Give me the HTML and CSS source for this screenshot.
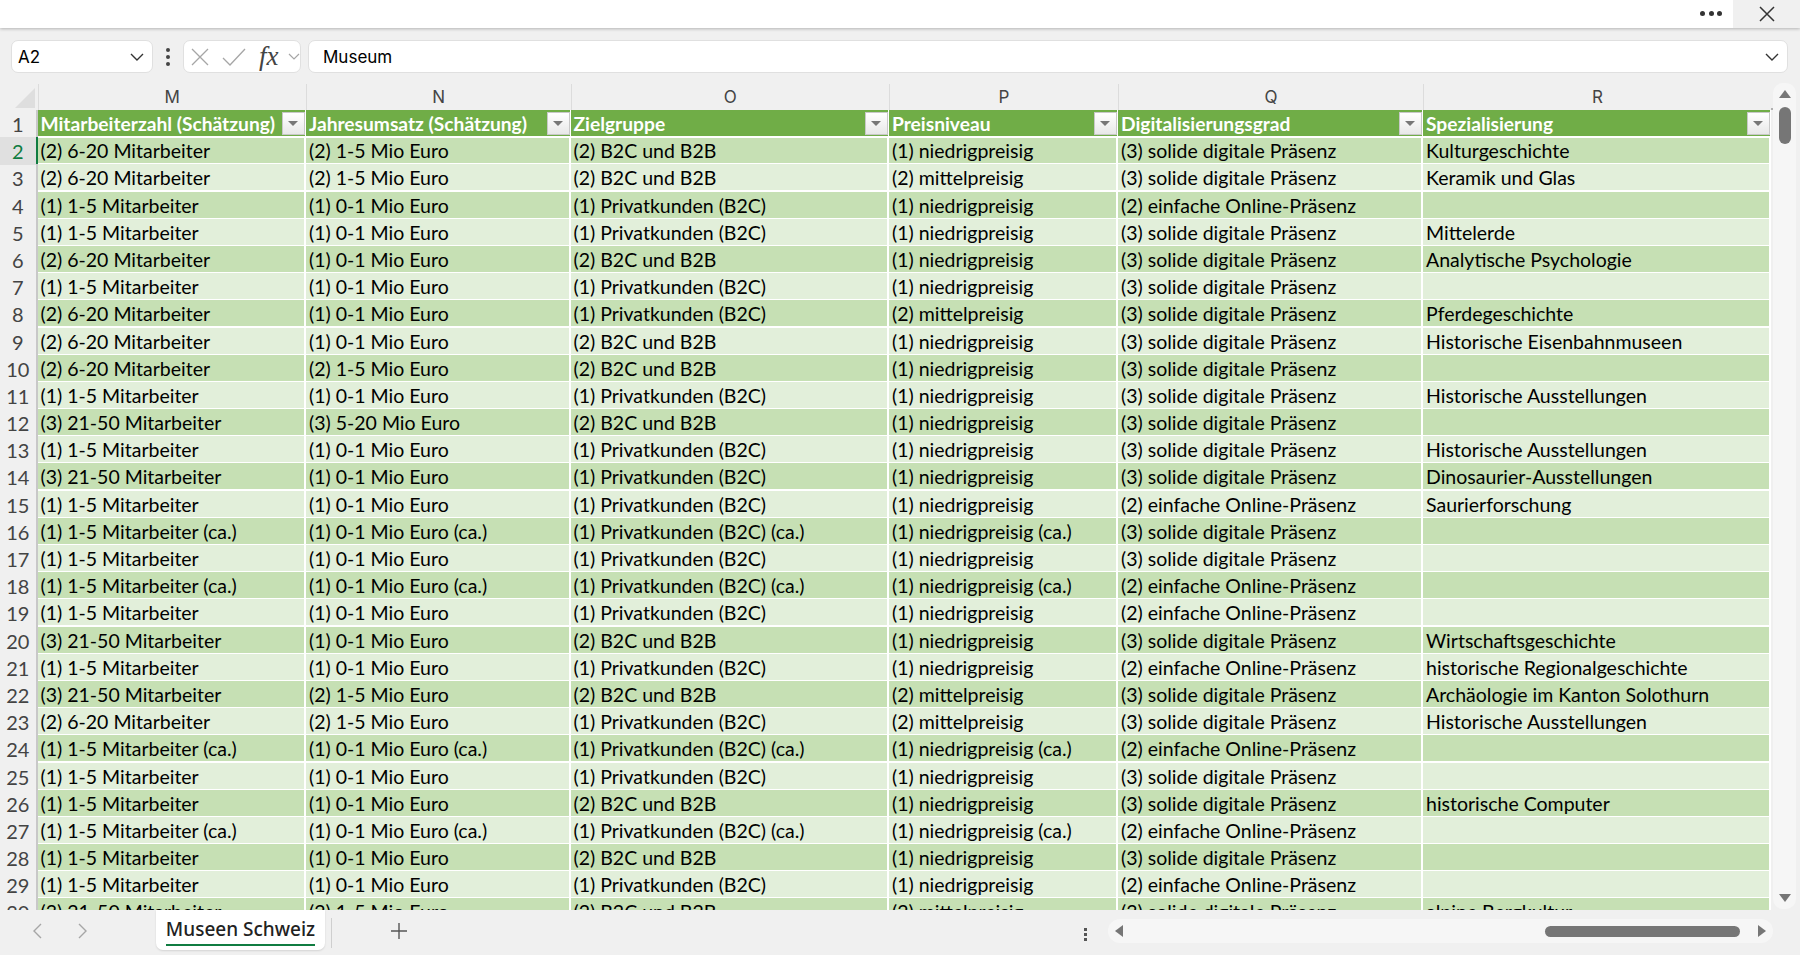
FILE: index.html
```html
<!DOCTYPE html>
<html>
<head>
  <meta charset="UTF-8">
  <title>Museen Schweiz</title>
  <link rel="stylesheet" href="styles.css">
</head>
<body>

<div class="titlebar">
  <span class="more"><i></i><i></i><i></i></span>
  <span class="close">
    <svg width="18" height="18" viewBox="0 0 18 18"><path d="M2 2 L16 16 M16 2 L2 16" stroke="#333" stroke-width="1.5" fill="none"/></svg>
  </span>
</div>

<div class="formulabar">
  <div class="box namebox">
    <span>A2</span>
    <svg width="14" height="8" viewBox="0 0 14 8"><path d="M1 1 L7 7 L13 1" stroke="#333" stroke-width="1.4" fill="none"/></svg>
  </div>
  <span class="vdots"><i></i><i></i><i></i></span>
  <div class="box fxbox">
    <svg width="18" height="18" viewBox="0 0 18 18"><path d="M1 1 L17 17 M17 1 L1 17" stroke="#a6a6a6" stroke-width="1.3" fill="none"/></svg>
    <svg class="check" width="24" height="18" viewBox="0 0 24 18"><path d="M1 10 L8 17 L23 1" stroke="#a6a6a6" stroke-width="1.3" fill="none"/></svg>
    <span class="fx">fx</span>
    <svg class="fxarrow" width="12" height="7" viewBox="0 0 12 7"><path d="M1 1 L6 6 L11 1" stroke="#a6a6a6" stroke-width="1.2" fill="none"/></svg>
  </div>
  <div class="box formula">
    <span>Museum</span>
    <svg width="14" height="8" viewBox="0 0 14 8"><path d="M1 1 L7 7 L13 1" stroke="#333" stroke-width="1.4" fill="none"/></svg>
  </div>
</div>

<div class="sheet">
  <div class="grid">
    <div class="row colheads">
      <div class="corner"><svg width="20" height="20" viewBox="0 0 20 20"><path d="M20 0 V20 H0 Z" fill="#dedede"/></svg></div>
      <div>M</div><div>N</div><div>O</div><div>P</div><div>Q</div><div>R</div>
    </div>
    <div class="row head">
      <div class="num">1</div>
      <div class="cell">Mitarbeiterzahl (Schätzung)<b class="filter"></b></div>
      <div class="cell">Jahresumsatz (Schätzung)<b class="filter"></b></div>
      <div class="cell">Zielgruppe<b class="filter"></b></div>
      <div class="cell">Preisniveau<b class="filter"></b></div>
      <div class="cell">Digitalisierungsgrad<b class="filter"></b></div>
      <div class="cell">Spezialisierung<b class="filter"></b></div>
    </div>
    <div class="row dark"><div class="num current">2</div><div class="cell">(2) 6-20 Mitarbeiter</div><div class="cell">(2) 1-5 Mio Euro</div><div class="cell">(2) B2C und B2B</div><div class="cell">(1) niedrigpreisig</div><div class="cell">(3) solide digitale Präsenz</div><div class="cell">Kulturgeschichte</div></div>
    <div class="row"><div class="num">3</div><div class="cell">(2) 6-20 Mitarbeiter</div><div class="cell">(2) 1-5 Mio Euro</div><div class="cell">(2) B2C und B2B</div><div class="cell">(2) mittelpreisig</div><div class="cell">(3) solide digitale Präsenz</div><div class="cell">Keramik und Glas</div></div>
    <div class="row dark"><div class="num">4</div><div class="cell">(1) 1-5 Mitarbeiter</div><div class="cell">(1) 0-1 Mio Euro</div><div class="cell">(1) Privatkunden (B2C)</div><div class="cell">(1) niedrigpreisig</div><div class="cell">(2) einfache Online-Präsenz</div><div class="cell"></div></div>
    <div class="row"><div class="num">5</div><div class="cell">(1) 1-5 Mitarbeiter</div><div class="cell">(1) 0-1 Mio Euro</div><div class="cell">(1) Privatkunden (B2C)</div><div class="cell">(1) niedrigpreisig</div><div class="cell">(3) solide digitale Präsenz</div><div class="cell">Mittelerde</div></div>
    <div class="row dark"><div class="num">6</div><div class="cell">(2) 6-20 Mitarbeiter</div><div class="cell">(1) 0-1 Mio Euro</div><div class="cell">(2) B2C und B2B</div><div class="cell">(1) niedrigpreisig</div><div class="cell">(3) solide digitale Präsenz</div><div class="cell">Analytische Psychologie</div></div>
    <div class="row"><div class="num">7</div><div class="cell">(1) 1-5 Mitarbeiter</div><div class="cell">(1) 0-1 Mio Euro</div><div class="cell">(1) Privatkunden (B2C)</div><div class="cell">(1) niedrigpreisig</div><div class="cell">(3) solide digitale Präsenz</div><div class="cell"></div></div>
    <div class="row dark"><div class="num">8</div><div class="cell">(2) 6-20 Mitarbeiter</div><div class="cell">(1) 0-1 Mio Euro</div><div class="cell">(1) Privatkunden (B2C)</div><div class="cell">(2) mittelpreisig</div><div class="cell">(3) solide digitale Präsenz</div><div class="cell">Pferdegeschichte</div></div>
    <div class="row"><div class="num">9</div><div class="cell">(2) 6-20 Mitarbeiter</div><div class="cell">(1) 0-1 Mio Euro</div><div class="cell">(2) B2C und B2B</div><div class="cell">(1) niedrigpreisig</div><div class="cell">(3) solide digitale Präsenz</div><div class="cell">Historische Eisenbahnmuseen</div></div>
    <div class="row dark"><div class="num">10</div><div class="cell">(2) 6-20 Mitarbeiter</div><div class="cell">(2) 1-5 Mio Euro</div><div class="cell">(2) B2C und B2B</div><div class="cell">(1) niedrigpreisig</div><div class="cell">(3) solide digitale Präsenz</div><div class="cell"></div></div>
    <div class="row"><div class="num">11</div><div class="cell">(1) 1-5 Mitarbeiter</div><div class="cell">(1) 0-1 Mio Euro</div><div class="cell">(1) Privatkunden (B2C)</div><div class="cell">(1) niedrigpreisig</div><div class="cell">(3) solide digitale Präsenz</div><div class="cell">Historische Ausstellungen</div></div>
    <div class="row dark"><div class="num">12</div><div class="cell">(3) 21-50 Mitarbeiter</div><div class="cell">(3) 5-20 Mio Euro</div><div class="cell">(2) B2C und B2B</div><div class="cell">(1) niedrigpreisig</div><div class="cell">(3) solide digitale Präsenz</div><div class="cell"></div></div>
    <div class="row"><div class="num">13</div><div class="cell">(1) 1-5 Mitarbeiter</div><div class="cell">(1) 0-1 Mio Euro</div><div class="cell">(1) Privatkunden (B2C)</div><div class="cell">(1) niedrigpreisig</div><div class="cell">(3) solide digitale Präsenz</div><div class="cell">Historische Ausstellungen</div></div>
    <div class="row dark"><div class="num">14</div><div class="cell">(3) 21-50 Mitarbeiter</div><div class="cell">(1) 0-1 Mio Euro</div><div class="cell">(1) Privatkunden (B2C)</div><div class="cell">(1) niedrigpreisig</div><div class="cell">(3) solide digitale Präsenz</div><div class="cell">Dinosaurier-Ausstellungen</div></div>
    <div class="row"><div class="num">15</div><div class="cell">(1) 1-5 Mitarbeiter</div><div class="cell">(1) 0-1 Mio Euro</div><div class="cell">(1) Privatkunden (B2C)</div><div class="cell">(1) niedrigpreisig</div><div class="cell">(2) einfache Online-Präsenz</div><div class="cell">Saurierforschung</div></div>
    <div class="row dark"><div class="num">16</div><div class="cell">(1) 1-5 Mitarbeiter (ca.)</div><div class="cell">(1) 0-1 Mio Euro (ca.)</div><div class="cell">(1) Privatkunden (B2C) (ca.)</div><div class="cell">(1) niedrigpreisig (ca.)</div><div class="cell">(3) solide digitale Präsenz</div><div class="cell"></div></div>
    <div class="row"><div class="num">17</div><div class="cell">(1) 1-5 Mitarbeiter</div><div class="cell">(1) 0-1 Mio Euro</div><div class="cell">(1) Privatkunden (B2C)</div><div class="cell">(1) niedrigpreisig</div><div class="cell">(3) solide digitale Präsenz</div><div class="cell"></div></div>
    <div class="row dark"><div class="num">18</div><div class="cell">(1) 1-5 Mitarbeiter (ca.)</div><div class="cell">(1) 0-1 Mio Euro (ca.)</div><div class="cell">(1) Privatkunden (B2C) (ca.)</div><div class="cell">(1) niedrigpreisig (ca.)</div><div class="cell">(2) einfache Online-Präsenz</div><div class="cell"></div></div>
    <div class="row"><div class="num">19</div><div class="cell">(1) 1-5 Mitarbeiter</div><div class="cell">(1) 0-1 Mio Euro</div><div class="cell">(1) Privatkunden (B2C)</div><div class="cell">(1) niedrigpreisig</div><div class="cell">(2) einfache Online-Präsenz</div><div class="cell"></div></div>
    <div class="row dark"><div class="num">20</div><div class="cell">(3) 21-50 Mitarbeiter</div><div class="cell">(1) 0-1 Mio Euro</div><div class="cell">(2) B2C und B2B</div><div class="cell">(1) niedrigpreisig</div><div class="cell">(3) solide digitale Präsenz</div><div class="cell">Wirtschaftsgeschichte</div></div>
    <div class="row"><div class="num">21</div><div class="cell">(1) 1-5 Mitarbeiter</div><div class="cell">(1) 0-1 Mio Euro</div><div class="cell">(1) Privatkunden (B2C)</div><div class="cell">(1) niedrigpreisig</div><div class="cell">(2) einfache Online-Präsenz</div><div class="cell">historische Regionalgeschichte</div></div>
    <div class="row dark"><div class="num">22</div><div class="cell">(3) 21-50 Mitarbeiter</div><div class="cell">(2) 1-5 Mio Euro</div><div class="cell">(2) B2C und B2B</div><div class="cell">(2) mittelpreisig</div><div class="cell">(3) solide digitale Präsenz</div><div class="cell">Archäologie im Kanton Solothurn</div></div>
    <div class="row"><div class="num">23</div><div class="cell">(2) 6-20 Mitarbeiter</div><div class="cell">(2) 1-5 Mio Euro</div><div class="cell">(1) Privatkunden (B2C)</div><div class="cell">(2) mittelpreisig</div><div class="cell">(3) solide digitale Präsenz</div><div class="cell">Historische Ausstellungen</div></div>
    <div class="row dark"><div class="num">24</div><div class="cell">(1) 1-5 Mitarbeiter (ca.)</div><div class="cell">(1) 0-1 Mio Euro (ca.)</div><div class="cell">(1) Privatkunden (B2C) (ca.)</div><div class="cell">(1) niedrigpreisig (ca.)</div><div class="cell">(2) einfache Online-Präsenz</div><div class="cell"></div></div>
    <div class="row"><div class="num">25</div><div class="cell">(1) 1-5 Mitarbeiter</div><div class="cell">(1) 0-1 Mio Euro</div><div class="cell">(1) Privatkunden (B2C)</div><div class="cell">(1) niedrigpreisig</div><div class="cell">(3) solide digitale Präsenz</div><div class="cell"></div></div>
    <div class="row dark"><div class="num">26</div><div class="cell">(1) 1-5 Mitarbeiter</div><div class="cell">(1) 0-1 Mio Euro</div><div class="cell">(2) B2C und B2B</div><div class="cell">(1) niedrigpreisig</div><div class="cell">(3) solide digitale Präsenz</div><div class="cell">historische Computer</div></div>
    <div class="row"><div class="num">27</div><div class="cell">(1) 1-5 Mitarbeiter (ca.)</div><div class="cell">(1) 0-1 Mio Euro (ca.)</div><div class="cell">(1) Privatkunden (B2C) (ca.)</div><div class="cell">(1) niedrigpreisig (ca.)</div><div class="cell">(2) einfache Online-Präsenz</div><div class="cell"></div></div>
    <div class="row dark"><div class="num">28</div><div class="cell">(1) 1-5 Mitarbeiter</div><div class="cell">(1) 0-1 Mio Euro</div><div class="cell">(2) B2C und B2B</div><div class="cell">(1) niedrigpreisig</div><div class="cell">(3) solide digitale Präsenz</div><div class="cell"></div></div>
    <div class="row"><div class="num">29</div><div class="cell">(1) 1-5 Mitarbeiter</div><div class="cell">(1) 0-1 Mio Euro</div><div class="cell">(1) Privatkunden (B2C)</div><div class="cell">(1) niedrigpreisig</div><div class="cell">(2) einfache Online-Präsenz</div><div class="cell"></div></div>
    <div class="row dark"><div class="num">30</div><div class="cell">(3) 21-50 Mitarbeiter</div><div class="cell">(2) 1-5 Mio Euro</div><div class="cell">(2) B2C und B2B</div><div class="cell">(2) mittelpreisig</div><div class="cell">(3) solide digitale Präsenz</div><div class="cell">alpine Bergkultur</div></div>
  </div>
  <div class="vscroll">
    <svg width="14" height="10" viewBox="0 0 14 10"><path d="M7 1 L13 9 H1 Z" fill="#767676"/></svg>
    <div class="vthumb"></div>
    <svg class="down" width="14" height="10" viewBox="0 0 14 10"><path d="M7 9 L13 1 H1 Z" fill="#767676"/></svg>
  </div>
</div>

<div class="tabbar">
  <div class="tabnav">
    <svg width="10" height="16" viewBox="0 0 10 16"><path d="M9 1 L2 8 L9 15" stroke="#a6a6a6" stroke-width="1.4" fill="none"/></svg>
    <svg width="10" height="16" viewBox="0 0 10 16"><path d="M1 1 L8 8 L1 15" stroke="#a6a6a6" stroke-width="1.4" fill="none"/></svg>
  </div>
  <div class="tab"><span>Museen Schweiz</span></div>
  <span class="tabsep"></span>
  <svg class="plus" width="16" height="16" viewBox="0 0 16 16"><path d="M8 0 V16 M0 8 H16" stroke="#555" stroke-width="1.4" fill="none"/></svg>
  <span class="vdots small"><i></i><i></i><i></i></span>
  <div class="hscroll">
    <svg width="10" height="14" viewBox="0 0 10 14"><path d="M1 7 L9 1 V13 Z" fill="#767676"/></svg>
    <div class="hthumb"></div>
    <svg width="10" height="14" viewBox="0 0 10 14"><path d="M9 7 L1 1 V13 Z" fill="#767676"/></svg>
  </div>
</div>

</body>
</html>
```
FILE: styles.css
```css
* {
  margin: 0;
  padding: 0;
  box-sizing: border-box;
}

body {
  width: 1800px;
  height: 955px;
  overflow: hidden;
  background: #f0f0f0;
  font-family: Lato, "Liberation Sans", sans-serif;
  color: #000;
  display: flex;
  flex-direction: column;
}

.titlebar {
  height: 28px;
  background: #fff;
  box-shadow: 0 1px 3px rgba(0, 0, 0, 0.25);
  display: flex;
  justify-content: flex-end;
  align-items: center;
  position: relative;
}

.more {
  display: flex;
  gap: 3.5px;
  margin: 0 11px 2px 0;
}

.more i {
  width: 5px;
  height: 5px;
  border-radius: 50%;
  background: #333;
}

.close {
  width: 67px;
  height: 28px;
  background: #f0f0f0;
  display: flex;
  align-items: center;
  justify-content: center;
}

.formulabar {
  height: 56px;
  padding: 12px 12px 11px 11px;
  display: flex;
  align-items: stretch;
}

.box {
  background: #fff;
  border: 1px solid #e0e0e0;
  border-radius: 7px;
  display: flex;
  align-items: center;
}

.namebox {
  width: 142px;
  padding: 0 8px 0 6px;
  justify-content: space-between;
  font-family: Inter, sans-serif;
  font-size: 17px;
}

.vdots {
  width: 30px;
  display: flex;
  flex-direction: column;
  align-items: center;
  justify-content: center;
  gap: 3px;
}

.vdots i {
  width: 4px;
  height: 4px;
  border-radius: 50%;
  background: #444;
}

.fxbox {
  width: 118px;
  padding-left: 7px;
}

.check {
  margin-left: 13px;
}

.fx {
  margin-left: 13px;
  font-family: "Liberation Serif", serif;
  font-style: italic;
  font-size: 27px;
  line-height: 27px;
  color: #444;
}

.fxarrow {
  margin-left: 9px;
}

.formula {
  flex: 1;
  margin-left: 7px;
  padding: 0 8px 0 14px;
  justify-content: space-between;
  font-family: Inter, sans-serif;
  font-size: 17px;
}

.sheet {
  height: 826px;
  display: flex;
}

.grid {
  width: 1773px;
  overflow: hidden;
}

.row {
  display: grid;
  grid-template-columns: 37.5px 268.5px 264.5px 318.5px 229px 305px 348px;
  height: 27.2px;
}

.colheads {
  height: 26px;
  font-family: Inter, sans-serif;
  font-size: 17px;
  color: #444;
  text-align: center;
  line-height: 26px;
  border-bottom: 2px solid #b0b0b0;
}

.colheads div {
  border-left: 1px solid #dcdcdc;
  background: #f0f0f0;
}

.colheads .corner {
  border-left: 0;
  display: flex;
  justify-content: flex-end;
  align-items: flex-end;
  padding: 0 3px 2px 0;
}

.num {
  font-size: 20px;
  color: #444;
  text-align: center;
  line-height: 28px;
  border-right: 2px solid #c8c8c8;
}

.num.current {
  background: #e0e0e0;
  color: #107c41;
  border-right-color: #107c41;
}

.cell {
  font-size: 19.5px;
  line-height: 28px;
  padding-left: 3px;
  background: #e2efda;
  border-right: 2px solid #fff;
  border-bottom: 2px solid #fff;
  white-space: nowrap;
  overflow: hidden;
}

.dark .cell {
  background: #c6e0b4;
}

.head .cell {
  background: #70ad47;
  color: #fff;
  font-size: 19.2px;
  font-weight: 700;
  position: relative;
  border-right-width: 1px;
}

.filter {
  position: absolute;
  right: 0;
  top: 2px;
  width: 23px;
  height: 23px;
  background: linear-gradient(#ffffff, #e8e8e8);
  border: 1px solid #c8c8c8;
}

.filter::after {
  content: "";
  position: absolute;
  left: 5px;
  top: 8px;
  border-left: 5px solid transparent;
  border-right: 5px solid transparent;
  border-top: 5px solid #777;
}

.vscroll {
  width: 23px;
  height: 826px;
  background: #f6f6f6;
  border-radius: 10px;
  display: flex;
  flex-direction: column;
  align-items: center;
  padding-top: 6px;
  margin-top: -1px;
}

.vthumb {
  width: 12px;
  height: 37px;
  margin-top: 8px;
  background: #767676;
  border-radius: 6px;
}

.down {
  margin-top: auto;
  margin-bottom: 6px;
}

.tabbar {
  flex: 1;
  display: flex;
  align-items: flex-start;
  position: relative;
}

.tabnav {
  width: 156px;
  display: flex;
  gap: 36px;
  padding: 13px 0 0 32px;
}

.tab {
  width: 169px;
  height: 40px;
  background: #fff;
  border-radius: 0 0 7px 7px;
  box-shadow: 0 1px 2px rgba(0, 0, 0, 0.12);
  font-family: "Noto Sans", sans-serif;
  font-size: 19px;
  font-weight: 500;
  color: #222;
  text-align: center;
  padding-top: 3px;
}

.tab span {
  display: inline-block;
  height: 33px;
  line-height: 33px;
  border-bottom: 2px solid #107c41;
}

.tabsep {
  width: 1px;
  height: 30px;
  margin: 8px 0 0 6px;
  background: #cfcfcf;
}

.plus {
  margin: 13px 0 0 59px;
}

.tabbar .vdots {
  width: 14px;
  margin: 17px 0 0 671px;
  height: 14px;
  gap: 2px;
}

.tabbar .vdots i {
  width: 3px;
  height: 3px;
  border-radius: 0;
  background: #555;
}

.hscroll {
  position: absolute;
  left: 1108px;
  top: 9px;
  width: 665px;
  height: 24px;
  background: #f6f6f6;
  border-radius: 12px;
  display: flex;
  align-items: center;
  padding: 0 6px;
}

.hthumb {
  width: 195px;
  height: 11px;
  margin: 0 17px 0 auto;
  background: #767676;
  border-radius: 6px;
}
```
